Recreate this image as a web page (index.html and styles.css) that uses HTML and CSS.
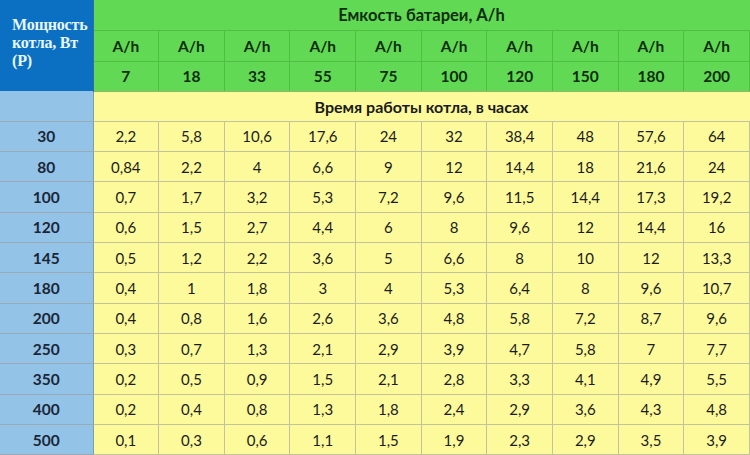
FILE: index.html
```html
<!DOCTYPE html>
<html lang="ru">
<head>
<meta charset="utf-8">
<link rel="stylesheet" href="styles.css">
</head>
<body>
<table class="grid">
  <colgroup>
    <col class="c-first">
    <col><col><col><col><col><col><col><col><col><col>
  </colgroup>
  <thead>
    <tr class="r-title">
      <th class="corner" rowspan="3">Мощность<br>котла, Вт<br>(Р)</th>
      <th class="cap" colspan="10">Емкость батареи, A/h</th>
    </tr>
    <tr class="r-unit">
      <th>A/h</th><th>A/h</th><th>A/h</th><th>A/h</th><th>A/h</th><th>A/h</th><th>A/h</th><th>A/h</th><th>A/h</th><th>A/h</th>
    </tr>
    <tr class="r-unit r-val">
      <th>7</th><th>18</th><th>33</th><th>55</th><th>75</th><th>100</th><th>120</th><th>150</th><th>180</th><th>200</th>
    </tr>
    <tr class="r-sub">
      <th class="side"></th>
      <th class="subcap" colspan="10">Время работы котла, в часах</th>
    </tr>
  </thead>
  <tbody>
    <tr><th class="side">30</th><td>2,2</td><td>5,8</td><td>10,6</td><td>17,6</td><td>24</td><td>32</td><td>38,4</td><td>48</td><td>57,6</td><td>64</td></tr>
    <tr><th class="side">80</th><td>0,84</td><td>2,2</td><td>4</td><td>6,6</td><td>9</td><td>12</td><td>14,4</td><td>18</td><td>21,6</td><td>24</td></tr>
    <tr><th class="side">100</th><td>0,7</td><td>1,7</td><td>3,2</td><td>5,3</td><td>7,2</td><td>9,6</td><td>11,5</td><td>14,4</td><td>17,3</td><td>19,2</td></tr>
    <tr><th class="side">120</th><td>0,6</td><td>1,5</td><td>2,7</td><td>4,4</td><td>6</td><td>8</td><td>9,6</td><td>12</td><td>14,4</td><td>16</td></tr>
    <tr><th class="side">145</th><td>0,5</td><td>1,2</td><td>2,2</td><td>3,6</td><td>5</td><td>6,6</td><td>8</td><td>10</td><td>12</td><td>13,3</td></tr>
    <tr><th class="side">180</th><td>0,4</td><td>1</td><td>1,8</td><td>3</td><td>4</td><td>5,3</td><td>6,4</td><td>8</td><td>9,6</td><td>10,7</td></tr>
    <tr><th class="side">200</th><td>0,4</td><td>0,8</td><td>1,6</td><td>2,6</td><td>3,6</td><td>4,8</td><td>5,8</td><td>7,2</td><td>8,7</td><td>9,6</td></tr>
    <tr><th class="side">250</th><td>0,3</td><td>0,7</td><td>1,3</td><td>2,1</td><td>2,9</td><td>3,9</td><td>4,7</td><td>5,8</td><td>7</td><td>7,7</td></tr>
    <tr><th class="side">350</th><td>0,2</td><td>0,5</td><td>0,9</td><td>1,5</td><td>2,1</td><td>2,8</td><td>3,3</td><td>4,1</td><td>4,9</td><td>5,5</td></tr>
    <tr><th class="side">400</th><td>0,2</td><td>0,4</td><td>0,8</td><td>1,3</td><td>1,8</td><td>2,4</td><td>2,9</td><td>3,6</td><td>4,3</td><td>4,8</td></tr>
    <tr><th class="side">500</th><td>0,1</td><td>0,3</td><td>0,6</td><td>1,1</td><td>1,5</td><td>1,9</td><td>2,3</td><td>2,9</td><td>3,5</td><td>3,9</td></tr>
  </tbody>
</table>
</body>
</html>
```

FILE: styles.css
```css
html, body {
  margin: 0;
  padding: 0;
  background: #ffffff;
}

.grid {
  width: 750px;
  border-collapse: collapse;
  table-layout: fixed;
  font-family: Lato, "Open Sans", "Liberation Sans", sans-serif;
  font-size: 15px;
  color: #1c1c1c;
}

.c-first {
  width: 93px;
}

.grid th,
.grid td {
  padding: 0;
  text-align: center;
  vertical-align: middle;
}

.r-title {
  height: 30px;
}

.r-unit {
  height: 31px;
}

.r-val {
  height: 30px;
}

.r-sub {
  height: 30px;
}

.grid tbody tr {
  height: 30.36px;
}

.grid .corner {
  background: #0b70c1;
  color: #e8f6ff;
  font-family: "Liberation Serif", "Times New Roman", serif;
  font-weight: bold;
  font-size: 16px;
  line-height: 18px;
  text-align: left;
  vertical-align: top;
  padding: 16px 2px 0 12px;
  border-right: 1px solid #2f6fa6;
  letter-spacing: -0.2px;
}

.grid .cap {
  background: #62d954;
  color: #0f2e0f;
  font-weight: bold;
  font-size: 16.5px;
  border-bottom: 1px solid #4fbf43;
}

.r-unit th {
  background: #62d954;
  color: #0f2e0f;
  font-weight: bold;
  font-size: 15.5px;
  border: 1px solid #4fbf43;
}

.r-val th {
  border-bottom: 1px solid #8fb86a;
}

.grid .side {
  background: #93c3e7;
  color: #1a2638;
  font-weight: bold;
  font-size: 15.5px;
  border-right: 1px solid #7e9db5;
  border-bottom: 1px solid #9aa9b3;
}

.grid .subcap {
  background: #fdfa9b;
  color: #1a1a1a;
  font-weight: bold;
  font-size: 16px;
  border-bottom: 1px solid #c4c29c;
}

.grid td {
  background: #fdfa9b;
  border: 1px solid #c4c29c;
}
```
